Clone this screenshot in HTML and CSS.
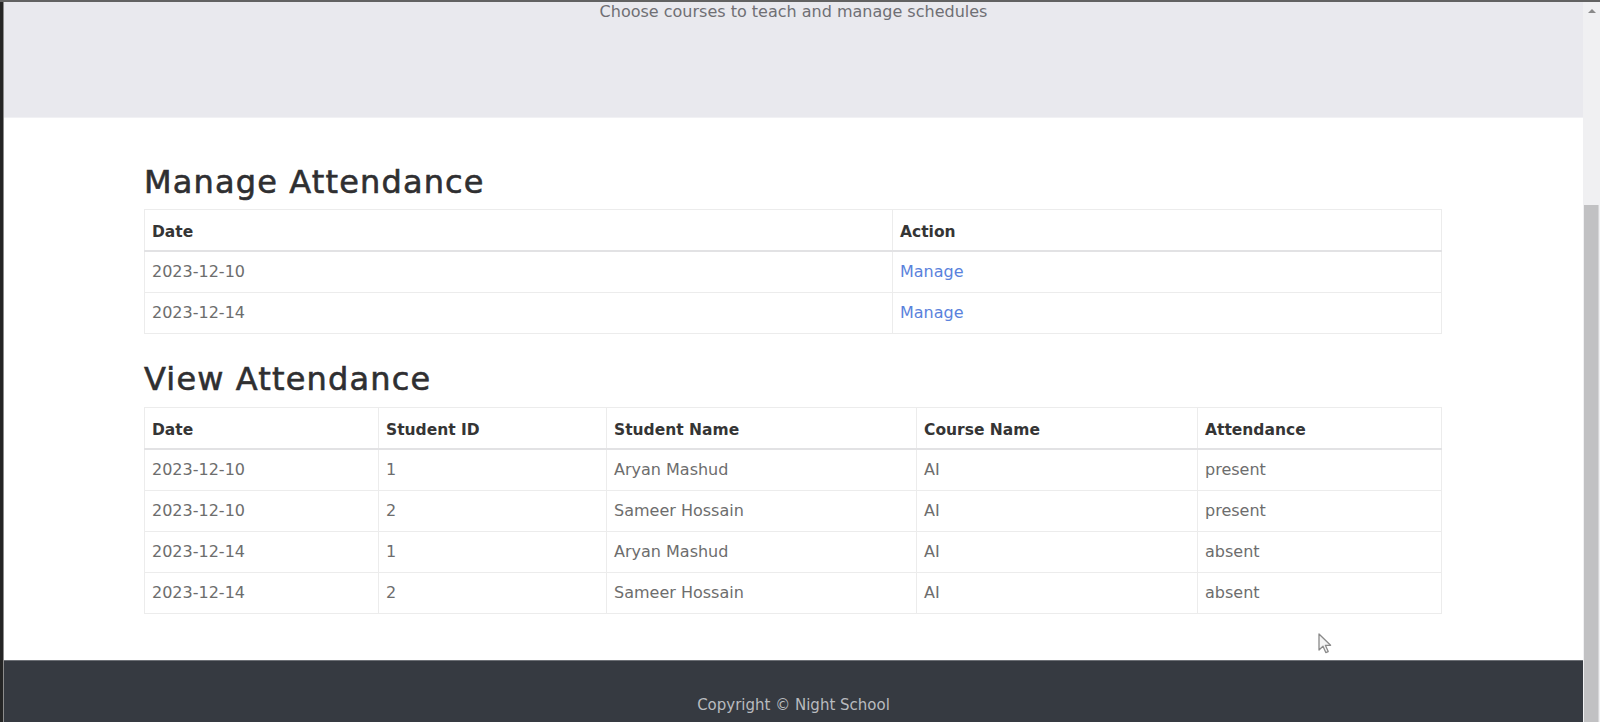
FILE: index.html
```html
<!DOCTYPE html>
<html lang="en">
<head>
<meta charset="utf-8">
<title>Manage Attendance</title>
<link rel="stylesheet" href="styles.css">
</head>
<body>
<div class="window">
  <div class="edge"></div>
  <div class="viewport">
    <header class="hero">
      <p class="lead">Choose courses to teach and manage schedules</p>
    </header>
    <main class="container">
      <section class="block">
        <h2 class="title">Manage Attendance</h2>
        <table class="grid">
          <colgroup>
            <col class="c-date1">
            <col>
          </colgroup>
          <thead>
            <tr><th>Date</th><th>Action</th></tr>
          </thead>
          <tbody>
            <tr><td>2023-12-10</td><td><a class="link" href="#">Manage</a></td></tr>
            <tr><td>2023-12-14</td><td><a class="link" href="#">Manage</a></td></tr>
          </tbody>
        </table>
      </section>
      <section class="block block-second">
        <h2 class="title">View Attendance</h2>
        <table class="grid">
          <colgroup>
            <col class="c-a">
            <col class="c-b">
            <col class="c-c">
            <col class="c-d">
            <col>
          </colgroup>
          <thead>
            <tr><th>Date</th><th>Student ID</th><th>Student Name</th><th>Course Name</th><th>Attendance</th></tr>
          </thead>
          <tbody>
            <tr><td>2023-12-10</td><td>1</td><td>Aryan Mashud</td><td>AI</td><td>present</td></tr>
            <tr><td>2023-12-10</td><td>2</td><td>Sameer Hossain</td><td>AI</td><td>present</td></tr>
            <tr><td>2023-12-14</td><td>1</td><td>Aryan Mashud</td><td>AI</td><td>absent</td></tr>
            <tr><td>2023-12-14</td><td>2</td><td>Sameer Hossain</td><td>AI</td><td>absent</td></tr>
          </tbody>
        </table>
      </section>
    </main>
    <footer class="footer">
      <p class="copy">Copyright © Night School</p>
    </footer>
  </div>
  <div class="scrollbar">
    <div class="sb-up"></div>
    <div class="sb-track"></div>
    <div class="sb-thumb"></div>
  </div>
  <svg class="cursor" width="14" height="22" viewBox="0 0 14 22" aria-hidden="true">
    <path d="M1 1 L1 17 L5 13.2 L7.8 19.6 L10.2 18.6 L7.4 12.3 L12.6 12.3 Z" fill="#f4f4f4" stroke="#8a8a8a" stroke-width="1.3" stroke-linejoin="round"/>
  </svg>
</div>
</body>
</html>
```
FILE: styles.css
```css
html, body {
  margin: 0;
  padding: 0;
  height: 722px;
  overflow: hidden;
  background: #ffffff;
}

body {
  font-family: "DejaVu Sans", "Open Sans", sans-serif;
  font-size: 16px;
  line-height: 24px;
  color: #6b6b6b;
}

.window {
  position: relative;
  display: flex;
  flex-direction: row;
  width: 1600px;
  height: 722px;
  border-top: 2px solid #626262;
  box-sizing: border-box;
}

.edge {
  width: 3px;
  flex: 0 0 3px;
  background: #252525;
  border-right: 1px solid #8c8c8c;
}

.viewport {
  flex: 0 0 1579px;
  width: 1579px;
  display: flex;
  flex-direction: column;
  overflow: hidden;
}

.hero {
  background: #e9e9ee;
  height: 116px;
  flex: 0 0 116px;
  border-bottom: 1px solid #f1f1f4;
  box-sizing: border-box;
}

.lead {
  margin: 0;
  margin-top: -2px;
  text-align: center;
  color: #6f6f74;
  font-size: 16px;
  line-height: 24px;
}

.container {
  width: 1298px;
  margin: 0 0 0 140px;
  padding: 45px 0 30px;
}

.block-second {
  padding-top: 10px;
}

.title {
  margin: 0 0 8px;
  font-size: 32px;
  line-height: 38.4px;
  font-weight: 400;
  letter-spacing: 1.15px;
  color: #2f2f31;
  -webkit-text-stroke: 0.6px #2f2f31;
}

.grid {
  width: 1298px;
  border-collapse: collapse;
  table-layout: fixed;
  margin-bottom: 16px;
}

.c-date1 { width: 748px; }
.c-a { width: 234px; }
.c-b { width: 228px; }
.c-c { width: 310px; }
.c-d { width: 281px; }

.grid th,
.grid td {
  border: 1px solid #ececec;
  padding: 8px 6px 8px 7px;
  text-align: left;
  vertical-align: top;
  white-space: nowrap;
}

.grid th {
  font-weight: 700;
  color: #353535;
  font-size: 15.5px;
  padding-top: 10px;
  padding-bottom: 6px;
  border-bottom: 2px solid #e2e2e4;
}

.grid td {
  color: #6d6d6d;
}

.link {
  color: #5a82dc;
  text-decoration: none;
}

.footer {
  background: #363a41;
  border-top: 1px solid #6c6f75;
  flex: 1 0 auto;
  padding-top: 34px;
}

.copy {
  margin: 0;
  text-align: center;
  color: #b9bbbf;
  font-size: 15px;
  line-height: 21px;
}

.scrollbar {
  position: relative;
  flex: 0 0 17px;
  width: 17px;
  background: #f0f0f2;
  display: flex;
  flex-direction: column;
  align-items: center;
}

.sb-up {
  margin-top: 7px;
  width: 0;
  height: 0;
  border-left: 4px solid transparent;
  border-right: 4px solid transparent;
  border-bottom: 4px solid #8a8a8a;
}

.sb-track {
  height: 192px;
}

.sb-thumb {
  width: 14px;
  flex: 1 0 auto;
  background: #c1c1c3;
  border-right: 1px solid #d6d6d8;
}

.cursor {
  position: absolute;
  left: 1318px;
  top: 631px;
}
```
